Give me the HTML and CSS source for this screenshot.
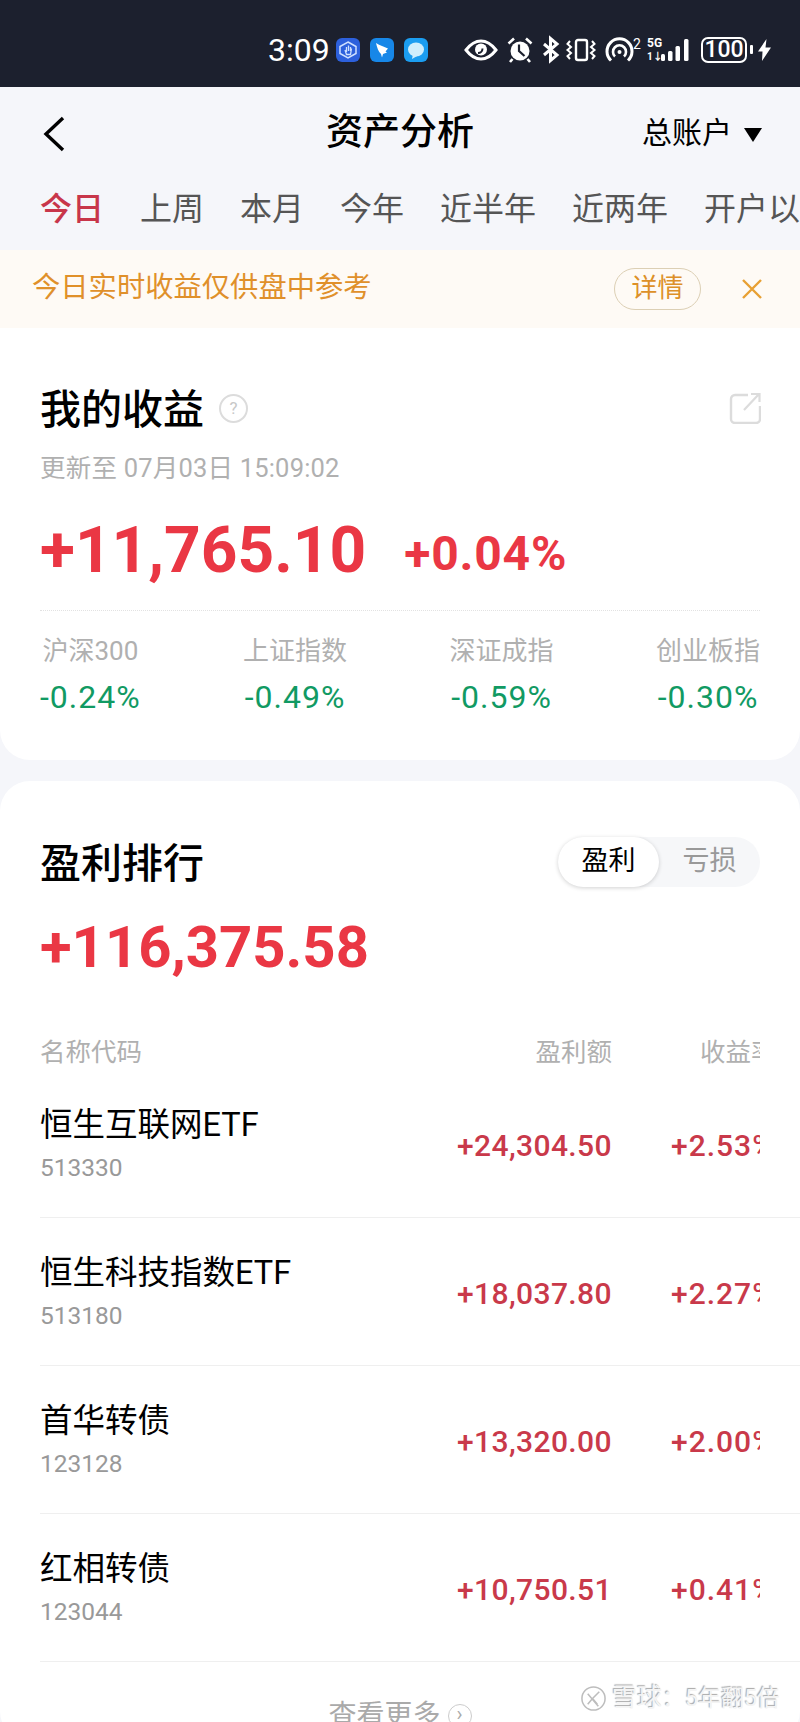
FILE: index.html
```html
<!DOCTYPE html>
<html lang="zh-CN">

<head>
    <meta charset="UTF-8">
    <meta name="viewport" content="width=device-width, initial-scale=1.0">
    <title>资产分析</title>
    <link rel="stylesheet" href="styles.css">
</head>

<body>
    <div class="status-bar">
        <span class="clock">3:09</span>
        <div class="app-icons">
            <svg class="app-icon" viewBox="0 0 24 24"><rect width="24" height="24" rx="6" fill="#2d60dc"/><path d="M12 4l8 4.500v7L12 20l-8-4.500v-7z" fill="none" stroke="#cfe0ff" stroke-width="1.500"/><path d="M9 12l1.500 4.500h4l1-6M10.500 14V9M12.500 13V7.500M14.500 13V9" fill="none" stroke="#cfe0ff" stroke-width="1.300"/></svg>
            <svg class="app-icon" viewBox="0 0 24 24"><rect width="24" height="24" rx="6" fill="#1787e8"/><path d="M6 5c4 2.500 8 3.500 12 5.500l-2.500 3 1.500 1-4 1.500-1 3.500-1-3.500C8.500 14 7 9.500 6 5z" fill="#fff"/></svg>
            <svg class="app-icon" viewBox="0 0 24 24"><rect width="24" height="24" rx="6" fill="#1b9df0"/><ellipse cx="12" cy="11.500" rx="8" ry="7" fill="#cfeefc"/><path d="M9 16l-1 5 6-3.500z" fill="#cfeefc"/></svg>
        </div>
        <div class="sys-icons">
            <svg class="sys-eye" viewBox="0 0 34 22"><path d="M2 11C7 4.500 12 2 17 2s10 2.500 15 9c-5 6.500-10 9-15 9S7 17.500 2 11z" fill="none" stroke="#fff" stroke-width="3"/><circle cx="17" cy="10.500" r="6" fill="#fff"/><path d="M14 14a4.500 4.500 0 0 0 4.500-4.500" fill="none" stroke="#1c202e" stroke-width="2"/></svg>
            <svg class="sys-alarm" viewBox="0 0 26 26"><circle cx="13" cy="14" r="9.500" fill="#fff"/><path d="M12 7.500V14l5.500 5" fill="none" stroke="#1c202e" stroke-width="2.200"/><path d="M1.500 6.500L7 1.500M24.500 6.500L19 1.500M5.500 22l-2.500 3M20.500 22l2.500 3" stroke="#fff" stroke-width="2.600" fill="none"/></svg>
            <svg class="sys-bt" viewBox="0 0 19 25"><path d="M3 7l13 11-6.500 5.500v-22L16 7 3 18" fill="none" stroke="#fff" stroke-width="3"/></svg>
            <svg class="sys-vibrate" viewBox="0 0 32 24"><rect x="11" y="2" width="11" height="20" rx="2" fill="none" stroke="#fff" stroke-width="2.400"/><path d="M5 3L2.500 6 6 9 2.500 12 6 15l-3.500 3L5 21M27 3l2.500 3L26 9l3.500 3L26 15l3.500 3L27 21" fill="none" stroke="#fff" stroke-width="2"/></svg>
            <svg class="sys-hotspot" viewBox="0 0 35 24"><path d="M6 22.500a12.500 12.500 0 1 1 17 0" fill="none" stroke="#fff" stroke-width="3"/><path d="M10 18.500a6.500 6.500 0 1 1 9 0" fill="none" stroke="#fff" stroke-width="2.600"/><circle cx="14.500" cy="14" r="2" fill="#fff"/><text class="hotspot-num" x="28" y="11">2</text></svg>
            <div class="net-type"><span>5G</span><span class="net-dir">1↓</span></div>
            <svg class="sys-bars" viewBox="0 0 30 24"><rect x="1" y="16" width="4" height="7" rx="1.500" fill="#fff"/><rect x="8" y="13" width="4.500" height="10" rx="1.500" fill="#fff"/><rect x="15.500" y="8" width="4.500" height="15" rx="1.500" fill="#fff"/><rect x="24" y="1" width="4.500" height="22" rx="1.500" fill="#fff"/></svg>
            <div class="battery"><span>100</span></div>
            <span class="battery-tip"></span>
            <svg class="sys-bolt" viewBox="0 0 13 22"><path d="M8.500 0L0 12.500h4.500L4 22l9-13.500H7.500z" fill="#fff"/></svg>
        </div>
    </div>

    <div class="nav">
        <svg class="back" viewBox="0 0 22 36"><path d="M20 2L3 18l17 16" fill="none" stroke="#000" stroke-width="3.400"/></svg>
        <h1 class="nav-title">资产分析</h1>
        <div class="account">总账户<span class="caret"></span></div>
    </div>

    <div class="tabs">
        <span class="tab tab-on">今日</span>
        <span class="tab">上周</span>
        <span class="tab">本月</span>
        <span class="tab">今年</span>
        <span class="tab">近半年</span>
        <span class="tab">近两年</span>
        <span class="tab">开户以来</span>
    </div>

    <div class="notice">
        <span class="notice-text">今日实时收益仅供盘中参考</span>
        <span class="notice-btn">详情</span>
        <svg class="notice-close" viewBox="0 0 20 20"><path d="M1 1l18 18M19 1L1 19" fill="none" stroke="#e8a033" stroke-width="2.400"/></svg>
    </div>

    <section class="card card-income">
        <div class="card-head">
            <h2 class="card-title">我的收益</h2>
            <span class="help">?</span>
            <svg class="share" viewBox="0 0 32 32"><path d="M19 3H6a4 4 0 0 0-4 4v20a4 4 0 0 0 4 4h21a4 4 0 0 0 4-4V14" fill="none" stroke="#dcdcdc" stroke-width="2.400"/><path d="M15 18L30 2M22 2h8.500v8" fill="none" stroke="#dcdcdc" stroke-width="2.200"/></svg>
        </div>
        <div class="updated">更新至 07月03日 15:09:02</div>
        <div class="income-row">
            <span class="income-num">+11,765.10</span>
            <span class="income-pct">+0.04%</span>
        </div>
        <div class="index-list">
            <div class="index-item"><span class="index-name">沪深300</span><span class="index-val">-0.24%</span></div>
            <div class="index-item"><span class="index-name">上证指数</span><span class="index-val">-0.49%</span></div>
            <div class="index-item"><span class="index-name">深证成指</span><span class="index-val">-0.59%</span></div>
            <div class="index-item"><span class="index-name">创业板指</span><span class="index-val">-0.30%</span></div>
        </div>
    </section>

    <section class="card card-rank">
        <div class="rank-head">
            <h2 class="card-title">盈利排行</h2>
            <div class="switch">
                <span class="switch-item switch-on">盈利</span>
                <span class="switch-item">亏损</span>
            </div>
        </div>
        <div class="rank-total">+116,375.58</div>

        <div class="rank-cols">
            <span class="col-name">名称代码</span>
            <span class="col-amount">盈利额</span>
            <span class="col-pct">收益率</span>
        </div>

        <div class="rank-row">
            <div class="col-name"><div class="stock-name">恒生互联网ETF</div><div class="stock-code">513330</div></div>
            <span class="col-amount rank-val">+24,304.50</span>
            <span class="col-pct rank-val">+2.53%</span>
        </div>
        <div class="rank-row">
            <div class="col-name"><div class="stock-name">恒生科技指数ETF</div><div class="stock-code">513180</div></div>
            <span class="col-amount rank-val">+18,037.80</span>
            <span class="col-pct rank-val">+2.27%</span>
        </div>
        <div class="rank-row">
            <div class="col-name"><div class="stock-name">首华转债</div><div class="stock-code">123128</div></div>
            <span class="col-amount rank-val">+13,320.00</span>
            <span class="col-pct rank-val">+2.00%</span>
        </div>
        <div class="rank-row">
            <div class="col-name"><div class="stock-name">红相转债</div><div class="stock-code">123044</div></div>
            <span class="col-amount rank-val">+10,750.51</span>
            <span class="col-pct rank-val">+0.41%</span>
        </div>

        <div class="more">查看更多<span class="more-icon">›</span></div>
    </section>

    <div class="watermark">
        <svg class="watermark-logo" viewBox="0 0 28 28"><circle cx="14" cy="14" r="12" fill="#fff" stroke="#bdbdbd" stroke-width="1.600"/><path d="M8 9l11 13M20 7l-7 7 5 6M8 20l5-6" fill="none" stroke="#bdbdbd" stroke-width="1.600"/></svg>
        <span><span class="watermark-brand">雪球</span>：5年翻5倍</span>
    </div>
</body>
</html>
```

FILE: styles.css
```css
/* Global Styles */
* {
    margin: 0;
    padding: 0;
    box-sizing: border-box;
}

html,
body {
    width: 800px;
    height: 1722px;
    overflow: hidden;
}

body {
    position: relative;
    font-family: Roboto, "Noto Sans CJK SC", sans-serif;
    background-color: #f5f6fa;
    color: #000;
}

/* Status bar */
.status-bar {
    height: 87px;
    background-color: #1c202e;
    color: #fff;
    display: flex;
    align-items: center;
    padding: 12px 0 0 268px;
}

.clock {
    font-size: 32px;
    line-height: 40px;
    width: 68px;
}

.app-icons {
    display: flex;
    gap: 10px;
}

.app-icon {
    width: 24px;
    height: 24px;
}

.sys-icons {
    display: flex;
    align-items: center;
    margin-left: 36px;
}

.sys-icons svg {
    overflow: visible;
}

.sys-eye {
    width: 34px;
    height: 22px;
}

.sys-alarm {
    width: 26px;
    height: 26px;
    margin-left: 9px;
}

.sys-bt {
    width: 19px;
    height: 25px;
    margin-left: 8px;
}

.sys-vibrate {
    width: 32px;
    height: 24px;
    margin-left: 5px;
}

.sys-hotspot {
    width: 35px;
    height: 24px;
    margin-left: 8px;
}

.hotspot-num {
    font-size: 14px;
    fill: #fff;
}

.net-type {
    width: 13px;
    margin-left: 7px;
    display: flex;
    flex-direction: column;
    font-size: 12px;
    line-height: 12px;
    font-weight: 700;
    white-space: nowrap;
}

.net-dir {
    font-size: 10px;
    margin-top: 2px;
}

.sys-bars {
    width: 30px;
    height: 24px;
}

.battery {
    width: 46px;
    height: 26px;
    margin-left: 11px;
    border: 2px solid #fff;
    border-radius: 7px;
    font-size: 23px;
    line-height: 22px;
    font-weight: 500;
    text-align: center;
}

.battery-tip {
    width: 3px;
    height: 9px;
    margin-left: 3px;
    background-color: #fff;
    border-radius: 1px;
}

.sys-bolt {
    width: 13px;
    height: 22px;
    margin-left: 5px;
}

/* Nav */
.nav {
    height: 92px;
    position: relative;
    display: flex;
    align-items: center;
    justify-content: center;
}

.back {
    position: absolute;
    left: 43px;
    top: 29px;
    width: 22px;
    height: 36px;
}

.nav-title {
    font-size: 37px;
    line-height: 50px;
    font-weight: 500;
}

.account {
    position: absolute;
    right: 38px;
    top: 26px;
    display: flex;
    align-items: center;
    font-size: 30px;
    line-height: 40px;
}

.caret {
    width: 0;
    height: 0;
    margin-left: 12px;
    margin-top: 4px;
    border-left: 9px solid transparent;
    border-right: 9px solid transparent;
    border-top: 14px solid #000;
}

.tabs {
    height: 71px;
    display: flex;
    gap: 36px;
    padding: 8px 0 0 40px;
    overflow: hidden;
    white-space: nowrap;
    font-size: 32px;
    line-height: 44px;
    color: #555;
}

.tab {
    flex-shrink: 0;
}

.tab-on {
    color: #c8364a;
    font-weight: 500;
}

/* Notice */
.notice {
    height: 78px;
    background-color: #fefaf5;
    display: flex;
    align-items: center;
    padding: 0 38px 0 32px;
}

.notice-text {
    font-size: 28.300px;
    line-height: 40px;
    padding-bottom: 2px;
    color: #e0902a;
    flex: 1;
}

.notice-btn {
    width: 87px;
    height: 42px;
    border: 1px solid #dccfb4;
    border-radius: 21px;
    font-size: 26px;
    line-height: 38px;
    text-align: center;
    color: #dd9028;
}

.notice-close {
    width: 20px;
    height: 20px;
    margin-left: 41px;
}

/* Cards */
.card {
    background-color: #fff;
    border-radius: 30px;
}

.card-income {
    height: 432px;
    padding: 58px 40px 0;
    border-radius: 0 0 30px 30px;
}

.card-rank {
    margin-top: 21px;
    height: 960px;
    padding-top: 56px;
}

.card-head {
    display: flex;
    align-items: center;
    height: 44px;
}

.card-title {
    font-size: 41px;
    line-height: 44px;
    padding-top: 4px;
    font-weight: 500;
}

.help {
    width: 29px;
    height: 29px;
    margin-left: 15px;
    border: 2px solid #dcdcdc;
    border-radius: 50%;
    font-size: 17px;
    line-height: 25px;
    text-align: center;
    color: #c8c8c8;
}

.share {
    width: 32px;
    height: 32px;
    margin-left: auto;
    margin-right: -1px;
}

.updated {
    margin-top: 23px;
    font-size: 25.500px;
    line-height: 30px;
    letter-spacing: 0.2px;
    color: #b0b0b0;
}

.income-row {
    margin-top: 28px;
    height: 80px;
    display: flex;
    align-items: center;
    color: #ea3744;
    font-weight: 700;
}

.income-num {
    font-size: 64px;
    line-height: 80px;
}

.income-pct {
    margin-left: 38px;
    margin-top: 5px;
    font-size: 48px;
    line-height: 60px;
    letter-spacing: 0.8px;
}

.index-list {
    margin-top: 19px;
    padding-top: 25px;
    border-top: 1px dotted #e2e2e2;
    display: flex;
    justify-content: space-between;
}

.index-item {
    display: flex;
    flex-direction: column;
    align-items: center;
}

.index-name {
    font-size: 26px;
    line-height: 30px;
    color: #b0b0b0;
}

.index-val {
    margin-top: 13px;
    font-size: 32px;
    line-height: 36px;
    letter-spacing: 1px;
    color: #119a63;
}

/* Rank */
.rank-head {
    display: flex;
    align-items: center;
    justify-content: space-between;
    padding: 0 40px;
}

.switch {
    width: 202px;
    height: 50px;
    display: flex;
    background-color: #f6f7f9;
    border-radius: 25px;
}

.switch-item {
    width: 101px;
    font-size: 27px;
    line-height: 48px;
    text-align: center;
    color: #999;
}

.switch-on {
    background-color: #fff;
    color: #000;
    border-radius: 25px;
    box-shadow: 0 1px 4px rgba(0, 0, 0, 0.18);
}

.rank-total {
    margin: 25px 0 0 40px;
    font-size: 58px;
    line-height: 70px;
    font-weight: 700;
    color: #ea3744;
}

.rank-cols,
.rank-row {
    display: flex;
    margin-left: 40px;
    padding-right: 40px;
}

.rank-cols {
    margin-top: 55px;
    height: 33px;
    font-size: 25.500px;
    line-height: 30px;
    color: #b0b0b0;
}

.rank-row {
    height: 148px;
    align-items: center;
    border-bottom: 1px solid #efefef;
}

.col-name {
    flex: 1;
}

.col-amount {
    text-align: right;
}

.col-pct {
    width: 148px;
    overflow: hidden;
    white-space: nowrap;
    padding-left: 88px;
}

.rank-row .col-pct {
    padding-left: 59px;
    letter-spacing: 1px;
}

.stock-name {
    font-size: 32.500px;
    line-height: 40px;
}

.stock-code {
    margin-top: 8px;
    font-size: 24.500px;
    line-height: 30px;
    color: #999;
}

.rank-val {
    font-size: 30px;
    line-height: 40px;
    font-weight: 500;
    letter-spacing: 0.4px;
    color: #c9394a;
    padding-top: 4px;
}

.more {
    margin-top: 34px;
    display: flex;
    justify-content: center;
    align-items: center;
    font-size: 28px;
    line-height: 40px;
    color: #aaa;
}

.more-icon {
    width: 24px;
    height: 24px;
    margin-left: 7px;
    border: 1px solid #ccc;
    border-radius: 50%;
    font-size: 20px;
    line-height: 19px;
    text-align: center;
}

/* Watermark sits over the list */
.watermark {
    position: absolute;
    left: 580px;
    top: 1684px;
    display: flex;
    align-items: center;
    gap: 5px;
    font-size: 23px;
    line-height: 28px;
    color: #f4f4f4;
    text-shadow: -1px -1px 1px #a8a8a8;
    white-space: nowrap;
}

.watermark-brand {
    font-size: 25px;
}

.watermark-logo {
    width: 27px;
    height: 27px;
}
```
